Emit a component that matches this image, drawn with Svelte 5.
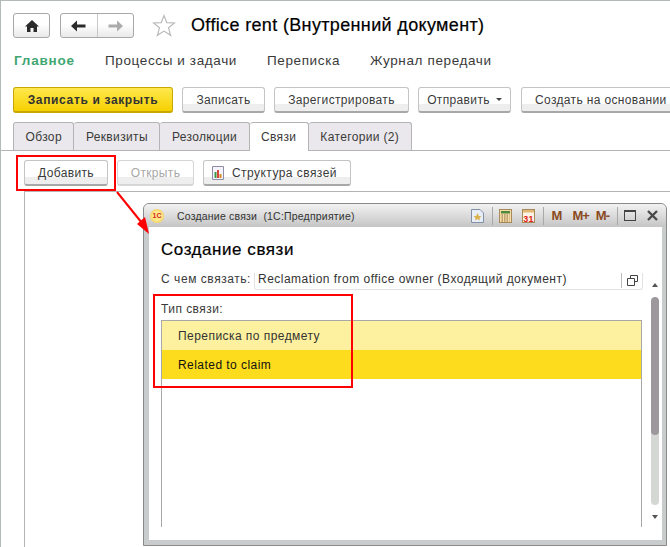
<script lang="ts">
	const nav = ["Процессы и задачи", "Переписка", "Журнал передачи"];
	const tabs = ["Обзор", "Реквизиты", "Резолюции", "Связи", "Категории (2)"];
	const activeTab = "Связи";
</script>

<div class="page">
	<header class="top">
		<button class="btn nav-btn home" aria-label="home">
			<svg width="16" height="14" viewBox="0 0 16 14"><path d="M8 1 L1 7.5 H3 V13 H6.5 V9 H9.5 V13 H13 V7.5 H15 Z" fill="#2b2b2b" /></svg>
		</button>
		<div class="btn nav-btn pair">
			<span class="half">
				<svg width="15" height="12" viewBox="0 0 15 12"><path d="M0 6 L6 0.5 V4.5 H14.5 V7.5 H6 V11.5 Z" fill="#2b2b2b" /></svg>
			</span>
			<span class="half last">
				<svg width="15" height="12" viewBox="0 0 15 12"><path d="M15 6 L9 0.5 V4.5 H0.5 V7.5 H9 V11.5 Z" fill="#ababab" /></svg>
			</span>
		</div>
		<svg class="star" width="24" height="23" viewBox="0 0 24 23"><path d="M12 1.5 L14.8 8.6 L22.5 9 L16.5 13.8 L18.6 21.3 L12 17.1 L5.4 21.3 L7.5 13.8 L1.5 9 L9.2 8.6 Z" fill="#fff" stroke="#b9b9b9" stroke-width="1.2" /></svg>
		<h1>Office rent (Внутренний документ)</h1>
	</header>

	<nav class="nav">
		<span class="nav-main">Главное</span>
		{#each nav as item}
			<span>{item}</span>
		{/each}
	</nav>

	<div class="actions">
		<button class="btn primary">Записать и закрыть</button>
		<button class="btn w83">Записать</button>
		<button class="btn w135">Зарегистрировать</button>
		<button class="btn w93">Отправить <i class="caret"></i></button>
		<button class="btn create">Создать на основании</button>
	</div>

	<div class="tabs">
		{#each tabs as tab}
			<div class="tab" class:active={tab === activeTab}>{tab}</div>
		{/each}
	</div>

	<div class="tab-tools">
		<button class="btn w84">Добавить</button>
		<button class="btn w77 disabled">Открыть</button>
		<button class="btn w148">
			<svg width="12" height="14" viewBox="0 0 12 14">
				<path d="M0.5 0.5 H11.5 V13.5 H0.5 Z" fill="#f4f4fa" stroke="#8d8da8" />
				<rect x="2.5" y="6" width="2" height="6" fill="#3c9a4a" />
				<rect x="5" y="4" width="2" height="8" fill="#d8463a" />
				<rect x="7.5" y="8" width="2" height="4" fill="#d88a2a" />
			</svg>
			<span>Структура связей</span>
		</button>
	</div>

	<div class="list-frame"></div>

	<section class="window">
		<div class="titlebar">
			<span class="logo">1С</span>
			<span class="wtitle">Создание связи &nbsp;(1С:Предприятие)</span>
			<div class="wtools">
				<svg width="13" height="14" viewBox="0 0 13 14">
					<path d="M0.5 0.5 H9 L12.5 4 V13.5 H0.5 Z" fill="#e8eef8" stroke="#8090a8" />
					<path d="M6.5 4 L7.8 7 L10.5 7.2 L8.4 9 L9.1 11.5 L6.5 10.1 L3.9 11.5 L4.6 9 L2.5 7.2 L5.2 7 Z" fill="#d9b04a" />
				</svg>
				<i class="sep"></i>
				<svg width="13" height="14" viewBox="0 0 13 14">
					<rect x="0.5" y="0.5" width="12" height="13" fill="#f6dca8" stroke="#a88a5a" />
					<rect x="2" y="2" width="9" height="2.5" fill="#4f8a3c" />
					<path d="M2.5 6 H10.5 M2.5 8 H10.5 M2.5 10 H10.5 M2.5 12 H10.5" stroke="#8a6a3a" stroke-dasharray="1.5 1" />
				</svg>
				<svg class="cal" width="13" height="14" viewBox="0 0 13 14">
					<rect x="0.5" y="0.5" width="12" height="13" fill="#fbf3e4" stroke="#a88a5a" />
					<rect x="1" y="1" width="11" height="2.5" fill="#e2b878" />
					<text x="6.5" y="12.5" text-anchor="middle">31</text>
				</svg>
				<i class="sep"></i>
				<b class="mem m1">M</b>
				<b class="mem m2">M+</b>
				<b class="mem m3">M-</b>
				<i class="sep"></i>
				<span class="maxi"></span>
				<svg class="close" width="11" height="11" viewBox="0 0 11 11"><path d="M1 1 L10 10 M10 1 L1 10" stroke="#4a4a4a" stroke-width="2.4" /></svg>
			</div>
		</div>

		<div class="wbody">
			<h2>Создание связи</h2>
			<div class="field-row">
				<span class="field-label">С чем связать:</span>
				<div class="field">
					<span class="field-value">Reclamation from office owner (Входящий документ)</span>
					<span class="field-btn">
						<svg width="11" height="11" viewBox="0 0 11 11"><path d="M3.5 3 V0.5 H10.5 V6.5 H7.5 M0.5 3.5 H7.5 V10.5 H0.5 Z" fill="none" stroke="#444" /></svg>
					</span>
				</div>
			</div>

			<div class="list-wrap">
				<div class="list-col">
					<div class="list-label">Тип связи:</div>
					<div class="list">
						<div class="row light">Переписка по предмету</div>
						<div class="row strong">Related to claim</div>
					</div>
				</div>
				<div class="scrollbar">
					<i class="arrow up"></i>
					<div class="track"><div class="thumb"></div></div>
					<i class="arrow down"></i>
				</div>
			</div>
		</div>
	</section>

	<div class="mark mark-add"></div>
	<div class="mark mark-list"></div>
	<svg class="pointer" width="40" height="48" viewBox="0 0 40 48">
		<path d="M1 1 L30 37" stroke="#f00" stroke-width="2" />
		<path d="M33 43 L21 33 L29 26 Z" fill="#f00" />
	</svg>
</div>

<style>
	:global(body) {
		margin: 0;
		background: #fff;
	}

	.page {
		position: relative;
		width: 670px;
		height: 547px;
		box-sizing: border-box;
		overflow: hidden;
		border-top: 1px solid #b4b9b9;
		border-left: 1px solid #b4b9b9;
		background: #fff;
		color: #3a3a3a;
		font-family: "Liberation Sans", Arial, sans-serif;
		font-size: 12px;
		letter-spacing: 0.35px;
	}

	.top {
		display: flex;
		align-items: center;
		height: 25px;
		padding: 12px 0 0 12px;
	}

	h1 {
		margin: 0 0 0 15px;
		color: #000;
		font-size: 18px;
		font-weight: normal;
		line-height: 27px;
		letter-spacing: 0.35px;
		white-space: nowrap;
		-webkit-text-stroke: 0.2px #000;
	}

	.star {
		margin-left: 18px;
	}

	.btn {
		display: inline-flex;
		align-items: center;
		justify-content: center;
		box-sizing: border-box;
		height: 26px;
		padding: 0;
		border: 1px solid #c4c4c4;
		border-bottom: 2px solid #a8a8a8;
		border-radius: 3px;
		background: linear-gradient(#fff 70%, #eeeeee 70%);
		color: #3a3a3a;
		font: inherit;
		letter-spacing: inherit;
		white-space: nowrap;
	}

	.nav-btn {
		height: 25px;
		border: 1px solid #a8a8a8;
		background: linear-gradient(#fff 45%, #e9e9e9);
	}

	.home {
		width: 37px;
	}

	.pair {
		width: 74px;
		margin-left: 10px;
	}

	.half {
		display: flex;
		flex: 1;
		align-items: center;
		justify-content: center;
		height: 100%;
		border-right: 1px solid #c8c8c8;
	}

	.half.last {
		border-right: none;
	}

	.nav {
		display: flex;
		gap: 30px;
		height: 16px;
		margin-top: 15px;
		padding-left: 13px;
		font-size: 13.5px;
		line-height: 16px;
		white-space: nowrap;
		letter-spacing: 0.62px;
	}

	.nav-main {
		width: 61px;
		color: #3fa772;
		font-weight: bold;
		letter-spacing: 0.8px;
	}

	.actions {
		display: flex;
		gap: 9px;
		margin-top: 18px;
		padding-left: 12px;
		width: 720px;
	}

	.primary {
		width: 160px;
		border-color: #c8a800;
		background: linear-gradient(#ffe84e, #f6d000);
		color: #333;
		font-weight: bold;
		letter-spacing: 0.65px;
	}

	.w83 { width: 83px; }
	.w135 { width: 135px; }
	.w93 { width: 93px; }
	.w84 { width: 84px; }
	.w77 { width: 77px; }
	.w148 {
		justify-content: flex-start;
		gap: 8px;
		width: 148px;
		padding-left: 8px;
		letter-spacing: 0.45px;
	}
	.create {
		justify-content: flex-start;
		flex: none;
		width: 160px;
		margin-left: 1px;
		padding-left: 13px;
	}

	.caret {
		width: 0;
		height: 0;
		margin-left: 6px;
		border-top: 3px solid #444;
		border-left: 3px solid transparent;
		border-right: 3px solid transparent;
	}

	.disabled {
		border-color: #d6d6d6;
		color: #a8a8a8;
	}

	.tabs {
		display: flex;
		height: 28px;
		margin-top: 9px;
		padding-left: 12px;
		border-bottom: 1px solid #b4b4b4;
	}

	.tab {
		display: flex;
		align-items: center;
		box-sizing: border-box;
		height: 28px;
		padding: 0 11.5px;
		border: 1px solid #b4b4b4;
		border-left: none;
		border-bottom: none;
		border-radius: 3px 3px 0 0;
		background: #eae8ec;
		white-space: nowrap;
	}

	.tab:first-child {
		border-left: 1px solid #b4b4b4;
	}

	.tab.active {
		height: 29px;
		background: #fff;
	}

	.tab-tools {
		display: flex;
		gap: 9px;
		margin-top: 9px;
		padding-left: 23px;
	}

	.list-frame {
		height: 400px;
		margin: 5px 0 0 23px;
		border-top: 1px solid #b4b4b4;
		border-left: 1px solid #b4b4b4;
	}

	.window {
		position: absolute;
		top: 202px;
		left: 142px;
		display: flex;
		flex-direction: column;
		box-sizing: border-box;
		width: 524px;
		height: 343px;
		border: 1px solid #8a8a8a;
		border-radius: 6px 6px 0 0;
		background: #c9cccc;
	}

	.titlebar {
		display: flex;
		align-items: center;
		flex: none;
		height: 23px;
		padding: 0 8px 0 6px;
		border-radius: 5px 5px 0 0;
		background: linear-gradient(#f2f2f2, #c5c5c5);
		font-size: 10.5px;
	}

	.logo {
		display: flex;
		align-items: center;
		justify-content: center;
		width: 14px;
		height: 14px;
		border-radius: 50%;
		background: radial-gradient(#ffe98a 45%, #e8b93a);
		color: #d3261c;
		font-size: 7px;
		font-weight: bold;
		letter-spacing: 0;
	}

	.wtitle {
		margin-left: 13px;
		color: #333;
		letter-spacing: 0.2px;
	}

	.wtools {
		display: flex;
		align-items: center;
		margin-left: auto;
	}

	.wtools > svg {
		margin-left: 10px;
	}

	.cal text {
		fill: #e0231a;
		font-size: 9px;
		font-weight: bold;
	}

	.sep {
		width: 1px;
		height: 18px;
		margin-left: 8px;
		background: #a8a8a8;
	}

	.wtools > .sep + svg {
		margin-left: 6px;
	}

	.mem {
		color: #8a4a22;
		font-size: 13px;
		letter-spacing: -1px;
	}

	.m1 { margin-left: 8px; }
	.m2 { margin-left: 11px; }
	.m3 { margin-left: 7px; }

	.maxi {
		box-sizing: border-box;
		width: 12px;
		height: 11px;
		margin-left: 6px;
		border: 1px solid #444;
		border-top-width: 2px;
	}

	.wtools > .close {
		margin-left: 11px;
	}

	.wbody {
		display: flex;
		flex: 1;
		flex-direction: column;
		min-height: 0;
		margin: 0 4px 5px 5px;
		padding: 0 0 0 12px;
		background: #fff;
		letter-spacing: 0.45px;
	}

	h2 {
		margin: 13px 0 0;
		color: #000;
		font-size: 17px;
		font-weight: normal;
		line-height: 20px;
		letter-spacing: 0.55px;
		-webkit-text-stroke: 0.2px #000;
	}

	.field-row {
		display: flex;
		flex: none;
		height: 17px;
		margin-top: 13px;
		overflow: hidden;
		line-height: 14px;
	}

	.field-label {
		flex: none;
		width: 93px;
		margin-top: -1px;
		white-space: nowrap;
		letter-spacing: 0.55px;
	}

	.field {
		display: flex;
		box-sizing: border-box;
		width: 389px;
		border-left: 1px solid #e2e2e2;
		border-right: 1px solid #e2e2e2;
		border-bottom: 1px solid #e2e2e2;
		border-radius: 0 0 3px 3px;
		padding-left: 3px;
	}

	.field-value {
		flex: 1;
		margin-top: -1px;
		white-space: nowrap;
		color: #333;
		letter-spacing: 0.48px;
	}

	.field-btn {
		display: flex;
		align-items: center;
		justify-content: center;
		width: 20px;
		height: 15px;
		border-left: 1px solid #bbb;
	}

	.list-wrap {
		display: flex;
		flex: 1;
		min-height: 0;
	}

	.list-col {
		display: flex;
		flex: 1;
		flex-direction: column;
		min-width: 0;
	}

	.list-label {
		height: 18px;
		margin: 10px 0 2px;
		line-height: 18px;
	}

	.list {
		flex: 1;
		border-top: 1px solid #a8a8a8;
		border-left: 1px solid #a8a8a8;
		border-right: 1px solid #a8a8a8;
		margin-bottom: 13px;
	}

	.row {
		height: 29px;
		padding-left: 16px;
		line-height: 30px;
		color: #333;
	}

	.light {
		background: #fdf09f;
	}

	.strong {
		background: #fcdc1c;
		color: #111;
	}

	.scrollbar {
		display: flex;
		flex: none;
		flex-direction: column;
		align-items: center;
		width: 15px;
		margin: -7px 0 0 5px;
		padding-bottom: 21px;
	}

	.arrow {
		flex: none;
		width: 0;
		height: 0;
		border-left: 3px solid transparent;
		border-right: 3px solid transparent;
	}

	.arrow.up {
		border-bottom: 4px solid #555;
	}

	.arrow.down {
		border-top: 4px solid #555;
	}

	.track {
		flex: 1;
		width: 8px;
		margin: 10px 0;
		border-radius: 4px;
		background: #d5d7d5;
		overflow: hidden;
	}

	.thumb {
		height: 138px;
		border-radius: 4px;
		background: #9c989c;
	}

	.mark {
		position: absolute;
		box-sizing: border-box;
		border: 2px solid #f00;
	}

	.mark-add {
		top: 154px;
		left: 15px;
		width: 100px;
		height: 36px;
	}

	.mark-list {
		top: 293px;
		left: 152px;
		width: 200px;
		height: 94px;
	}

	.pointer {
		position: absolute;
		top: 190px;
		left: 115px;
	}
</style>
